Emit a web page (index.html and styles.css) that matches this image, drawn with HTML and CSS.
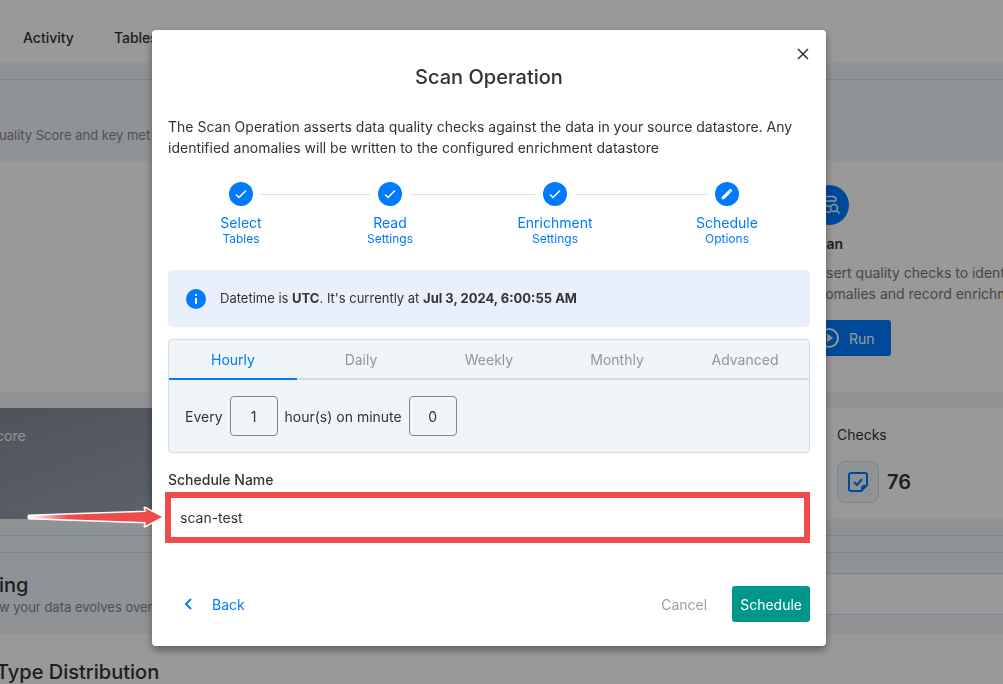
FILE: index.html
```html
<!DOCTYPE html>
<html lang="en">
<head>
<meta charset="utf-8">
<meta name="viewport" content="width=device-width, initial-scale=1">
<title>Scan Operation</title>
<link rel="stylesheet" href="styles.css">
</head>
<body>
<div class="page">
  <nav class="topnav">
    <a class="topnav-link" href="#">Activity</a>
    <a class="topnav-link" href="#">Tables</a>
  </nav>
  <header class="summary"><p class="muted">uality Score and key met</p></header>
  <section class="operations">
    <article class="operation">
      <span class="operation-icon">
        <svg width="24" height="24" viewBox="0 0 24 24" fill="none" stroke="currentColor" stroke-width="1.500"><path d="M8 8.500C5 8 4 7 4 6s2-2.500 7-2.500h4c2.500 0 4 1 4 3s-1 1.500-3 1.500H9M4 6v12c0 1.500 2 2 5 2M9 13h4M9 19h5"/><circle cx="17" cy="15" r="3.500"/><path d="M19.500 17.500l3 3"/></svg>
      </span>
      <h3 class="operation-title">Scan</h3>
      <p class="operation-text">Assert quality checks to identify<br>anomalies and record enrichment</p>
      <button class="run" type="button">
        <svg width="20" height="20" viewBox="0 0 20 20"><circle cx="10" cy="10" r="9" fill="none" stroke="currentColor" stroke-width="2"/><path d="M8 5.500v9l6-4.500z" fill="currentColor"/></svg>
        Run
      </button>
    </article>
  </section>
  <section class="stats">
    <article class="score">core</article>
    <article class="checks">
      <h3 class="checks-title">Checks</h3>
      <div class="checks-row">
        <span class="checks-icon">
          <svg width="22" height="22" viewBox="0 0 22 22" fill="none" stroke="currentColor" stroke-width="2"><path d="M14 20H4a2 2 0 0 1-2-2V4a2 2 0 0 1 2-2h14a2 2 0 0 1 2 2v10z"/><path d="M15 19v-2a2 2 0 0 1 2-2h2z" fill="currentColor"/><path d="M7 11l3 3 5-6"/></svg>
        </span>
        <strong class="checks-value">76</strong>
      </div>
    </article>
  </section>
  <div class="divider"></div>
  <section class="profiling">
    <div class="profiling-text">
      <h2 class="section-title">ing</h2>
      <p class="muted">w your data evolves over</p>
    </div>
    <div class="filter"></div>
  </section>
  <section class="distribution"><h2 class="section-title">Type Distribution</h2></section>
</div>

<div class="overlay">
  <form class="dialog" role="dialog" aria-labelledby="dialog-title">
    <button class="close" type="button" aria-label="Close">
      <svg width="12" height="12" viewBox="0 0 12 12" fill="none" stroke="currentColor" stroke-width="1.500"><path d="M1 1l10 10M11 1L1 11"/></svg>
    </button>
    <h1 class="dialog-title" id="dialog-title">Scan Operation</h1>
    <p class="intro">The Scan Operation asserts data quality checks against the data in your source datastore. Any identified anomalies will be written to the configured enrichment datastore</p>

    <div class="stepper">
      <div class="step">
        <span class="step-dot"><svg width="12" height="12" viewBox="0 0 12 12" fill="none" stroke="currentColor" stroke-width="1.500"><path d="M1 6.500l3 3 7-7"/></svg></span>
        <span class="step-name">Select</span><span class="step-sub">Tables</span>
      </div>
      <span class="step-line first"></span>
      <div class="step">
        <span class="step-dot"><svg width="12" height="12" viewBox="0 0 12 12" fill="none" stroke="currentColor" stroke-width="1.500"><path d="M1 6.500l3 3 7-7"/></svg></span>
        <span class="step-name">Read</span><span class="step-sub">Settings</span>
      </div>
      <span class="step-line second"></span>
      <div class="step">
        <span class="step-dot"><svg width="12" height="12" viewBox="0 0 12 12" fill="none" stroke="currentColor" stroke-width="1.500"><path d="M1 6.500l3 3 7-7"/></svg></span>
        <span class="step-name">Enrichment</span><span class="step-sub">Settings</span>
      </div>
      <span class="step-line third"></span>
      <div class="step">
        <span class="step-dot"><svg width="14" height="14" viewBox="0 0 24 24" fill="currentColor"><path d="M20.700 7c.4-.4.4-1 0-1.400l-2.300-2.300c-.4-.4-1-.4-1.400 0l-1.800 1.800L19 8.900M3 17.200V21h3.800L18.500 9.400l-3.800-3.800z"/></svg></span>
        <span class="step-name">Schedule</span><span class="step-sub">Options</span>
      </div>
    </div>

    <div class="notice">
      <svg width="20" height="20" viewBox="0 0 20 20"><circle cx="10" cy="10" r="10" fill="#007bff"/><path d="M9 5h2v2H9zM9 9h2v6H9z" fill="#fff"/></svg>
      <p>Datetime is <b>UTC</b>. It's currently at <b>Jul 3, 2024, 6:00:55 AM</b></p>
    </div>

    <div class="schedule">
      <div class="tabs" role="tablist">
        <button class="tab active" type="button" role="tab" aria-selected="true">Hourly</button>
        <button class="tab" type="button" role="tab">Daily</button>
        <button class="tab" type="button" role="tab">Weekly</button>
        <button class="tab" type="button" role="tab">Monthly</button>
        <button class="tab" type="button" role="tab">Advanced</button>
      </div>
      <div class="interval">
        <label for="hours">Every</label>
        <input class="number" id="hours" type="text" value="1">
        <label for="minute">hour(s) on minute</label>
        <input class="number" id="minute" type="text" value="0">
      </div>
    </div>

    <label class="name-label" for="name">Schedule Name</label>
    <div class="name-field">
      <input class="name-input" id="name" type="text" value="scan-test">
      <span class="highlight"></span>
      <svg class="arrow" width="140" height="26" viewBox="0 0 140 26">
        <defs><linearGradient id="arrow-fill"><stop offset="0" stop-color="#fff"/><stop offset="0.300" stop-color="#ed4c4a"/></linearGradient></defs>
        <path d="M5 12L122 8l-1-4 16 9-16 9 1-4L5 14z" fill="url(#arrow-fill)" stroke="#fff" stroke-width="3" stroke-linejoin="round"/>
        <path d="M5 12L122 8l-1-4 17 9-17 9 1-4L5 14z" fill="url(#arrow-fill)"/>
      </svg>
    </div>

    <div class="actions">
      <button class="back" type="button">
        <svg width="8" height="12" viewBox="0 0 8 12" fill="none" stroke="currentColor" stroke-width="2"><path d="M7 1L2 6l5 5"/></svg>
        Back
      </button>
      <button class="cancel" type="button">Cancel</button>
      <button class="submit" type="submit">Schedule</button>
    </div>
  </form>
</div>
</body>
</html>
```
FILE: styles.css
```css
* { box-sizing: border-box; }
body, h1, h2, h3, p { margin: 0; }
body {
  height: 100vh;
  overflow: hidden;
  background: #fff;
  color: #333;
  font-family: Inter, "Liberation Sans", sans-serif;
  font-size: 14px;
  line-height: 21px;
}
button, input { font: inherit; color: inherit; }
button { padding: 0; border: 0; background: none; }
svg { display: block; flex: none; }

.page { margin-left: -4px; background: #f0f5fa; }
.muted { color: #888; font-size: 13px; }
.topnav {
  display: flex;
  gap: 40px;
  height: 63px;
  padding: 27px 27px 0;
  background: #fff;
}
.topnav-link { color: #333; font-weight: 500; text-decoration: none; }
.summary {
  height: 82px;
  margin-top: 16px;
  padding: 45px 0 0 3px;
  border-top: 1px solid #d4dae2;
}
.operations {
  display: flex;
  justify-content: flex-end;
  height: 231px;
  padding-top: 24px;
  background: #fff;
}
.operation { width: 194px; white-space: nowrap; }
.operation-icon {
  display: flex;
  align-items: center;
  justify-content: center;
  width: 40px;
  height: 40px;
  border-radius: 50%;
  background: #007bff;
  color: #fff;
}
.operation-title { margin-top: 8px; font-size: 14px; font-weight: 600; }
.operation-text { margin-top: 8px; color: #777; }
.run {
  display: flex;
  align-items: center;
  gap: 10px;
  height: 36px;
  margin-top: 16px;
  padding: 0 16px 0 10px;
  border-radius: 3px;
  background: #007bff;
  color: #fff;
}
.stats {
  display: flex;
  justify-content: space-between;
  height: 111px;
  margin-top: 16px;
  background: #fff;
}
.score {
  width: 420px;
  padding: 17px 0;
  background: linear-gradient(160deg, #858a96, #a3b0c4);
  color: #f4f5f7;
}
.checks { width: 182px; padding: 16px; }
.checks-title { font-size: 14px; font-weight: 400; }
.checks-row { display: flex; align-items: center; gap: 8px; margin-top: 16px; }
.checks-icon {
  display: flex;
  align-items: center;
  justify-content: center;
  width: 42px;
  height: 42px;
  border: 1px solid #d4dae2;
  border-radius: 8px;
  background: #f0f5fa;
  color: #007bff;
}
.checks-value { font-size: 20px; font-weight: 600; }
.divider {
  height: 18px;
  margin-top: 16px;
  border: solid #d4dae2;
  border-width: 1px 0;
}
.profiling {
  display: flex;
  justify-content: space-between;
  height: 81px;
  padding: 20px 0 19px;
}
.profiling-text { padding-left: 3px; }
.section-title { font-size: 20px; font-weight: 500; line-height: 24px; }
.filter {
  width: 400px;
  border: solid #d4dae2;
  border-width: 1px 0;
  background: #fff;
}
.distribution { height: 80px; padding-top: 26px; background: #fff; }

.overlay {
  position: fixed;
  inset: 0;
  display: flex;
  align-items: flex-start;
  justify-content: center;
  padding: 30px 25px 0 0;
  background: rgba(0, 0, 0, .4);
}
.dialog {
  display: flex;
  flex-direction: column;
  position: relative;
  width: 100%;
  max-width: 674px;
  padding: 35px 16px 24px;
  border-radius: 4px;
  background: #fff;
  box-shadow: 0 4px 8px rgba(0, 0, 0, .4);
}
.close {
  position: absolute;
  top: 14px;
  right: 13px;
  display: flex;
  align-items: center;
  justify-content: center;
  width: 20px;
  height: 20px;
}
.dialog-title { font-size: 20px; font-weight: 500; line-height: 24px; text-align: center; }
.intro { margin-top: 27px; }
.stepper {
  display: flex;
  align-items: flex-start;
  margin-top: 24px;
  padding: 0 63px 0 53px;
  color: #007bff;
}
.step {
  display: flex;
  flex: none;
  flex-direction: column;
  align-items: center;
  width: 40px;
  white-space: nowrap;
}
.step-dot {
  display: flex;
  align-items: center;
  justify-content: center;
  width: 24px;
  height: 24px;
  border-radius: 50%;
  background: #007bff;
  color: #fff;
}
.step-name { margin-top: 8px; line-height: 18px; }
.step-sub { font-size: 12px; line-height: 14px; }
.step-line { height: 1px; margin-top: 12px; background: #e0e0e0; }
.first { flex: 109; }
.second { flex: 125; }
.third { flex: 132; }
.notice {
  display: flex;
  align-items: center;
  gap: 14px;
  margin-top: 24px;
  padding: 18px;
  border-radius: 4px;
  background: #e9f0fc;
  font-size: 13px;
}
.notice b { font-weight: 700; }
.schedule {
  margin-top: 12px;
  border: 1px solid #d7dce1;
  border-radius: 4px;
  background: #f0f5fa;
}
.tabs { display: flex; }
.tab {
  flex: 1;
  height: 40px;
  border-bottom: 2px solid #d7dce1;
  color: #949698;
}
.tab.active { border-color: #007bff; color: #007bff; }
.interval { display: flex; align-items: center; gap: 7px; padding: 16px; }
.number {
  width: 48px;
  height: 40px;
  border: 1px solid #858789;
  border-radius: 4px;
  background: none;
  text-align: center;
}
.name-label { margin-top: 16px; font-weight: 500; }
.name-field { position: relative; margin-top: 2px; padding: 6px; }
.name-input {
  display: block;
  width: 100%;
  height: 39px;
  padding: 0 6px;
  border: 0;
  background: none;
}
.highlight {
  position: absolute;
  inset: 0 0 0 -3px;
  border: 6px solid #ed4c4a;
  pointer-events: none;
}
.arrow { position: absolute; top: 12px; right: 100%; margin-right: 4px; }
.actions { display: flex; align-items: center; margin-top: 43px; }
.back {
  display: flex;
  align-items: center;
  gap: 20px;
  margin-right: auto;
  padding-left: 16px;
  color: #007bff;
}
.cancel { margin-right: 25px; color: #a0a0a0; }
.submit {
  height: 36px;
  padding: 0 8px;
  border-radius: 3px;
  background: #009688;
  color: #fff;
}
```
